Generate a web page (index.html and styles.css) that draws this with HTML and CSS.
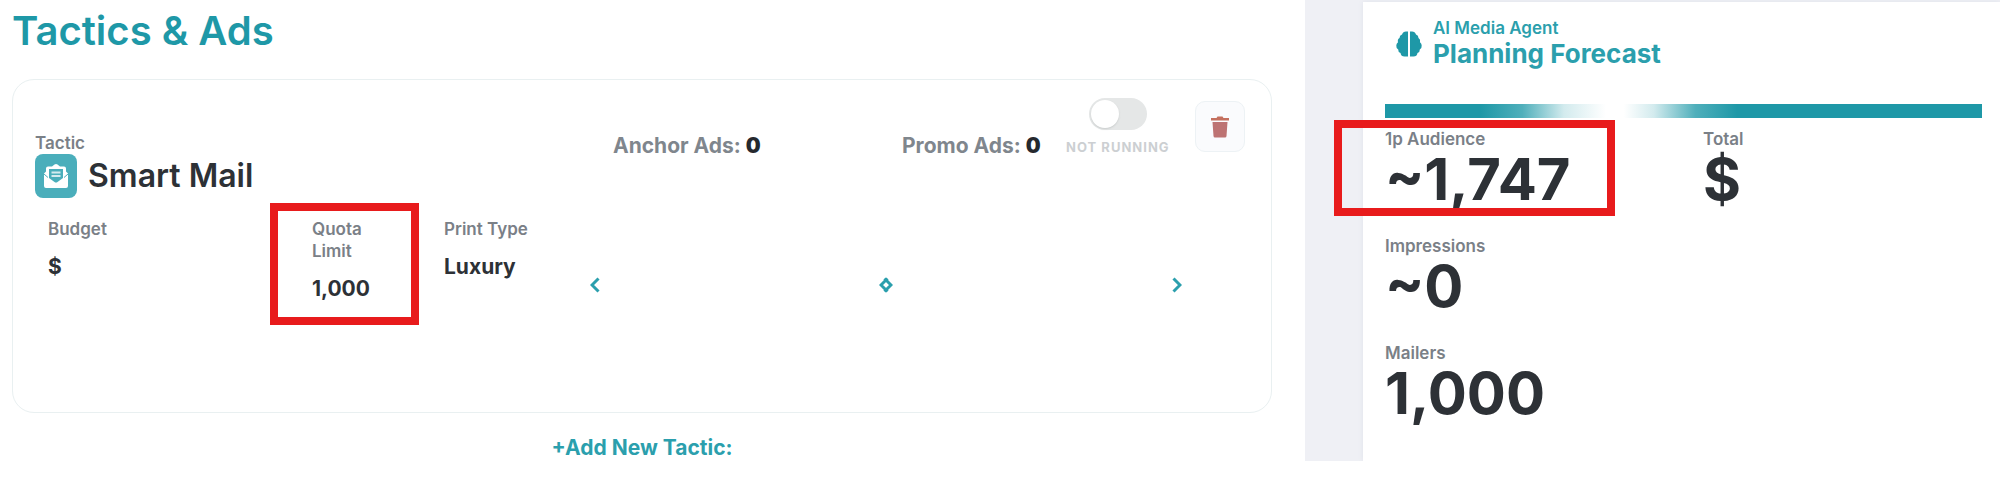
FILE: index.html
```html
<!DOCTYPE html>
<html lang="en">
<head>
<meta charset="utf-8">
<title>Tactics &amp; Ads</title>
<link rel="stylesheet" href="styles.css">
</head>
<body>
<div class="page">
  <main class="main">
    <h1 class="title">Tactics &amp; Ads</h1>
    <section class="card">
      <header class="card-head">
        <div class="tactic">
          <div class="label">Tactic</div>
          <div class="tactic-row">
            <span class="tactic-icon">
              <svg width="26" height="26" viewBox="0 0 26 26" aria-hidden="true">
                <path d="M1 10.500 3 8.500V5.500Q3 3.500 5 3.500H9L11.500 1.500Q13 .5 14.500 1.500L17 3.500H21Q23 3.500 23 5.500V8.500L25 10.500V23Q25 25 23 25H3Q1 25 1 23Z" fill="#fff"/>
                <path d="M6 6H20V15L14.500 19Q13 20 11.500 19L6 15Z" fill="#4aaebb"/>
                <path d="M8.500 9.500H17.500M8.500 13H17.500" stroke="#d3ebef" stroke-width="2"/>
                <path d="M1 11 5 14.500M25 11 21 14.500" fill="none" stroke="#4aaebb" stroke-width="1"/>
              </svg>
            </span>
            <h2 class="tactic-name">Smart Mail</h2>
          </div>
        </div>
        <div class="count">Anchor Ads: <b>0</b></div>
        <div class="actions">
          <div class="count">Promo Ads: <b>0</b></div>
          <label class="status">
            <input class="switch" type="checkbox">
            <span class="status-text">NOT RUNNING</span>
          </label>
          <button class="trash" type="button" aria-label="Delete tactic">
            <svg width="18" height="22" viewBox="0 0 18 22" aria-hidden="true">
              <path d="M0 2H5.500L6.500 .5H11.500L12.500 2H18V4.500H0Z" fill="#c4705f"/>
              <path d="M1.500 6H16.500L15.500 20Q15.400 21.500 14 21.500H4Q2.600 21.500 2.500 20Z" fill="#bd7373"/>
            </svg>
          </button>
        </div>
      </header>
      <div class="details">
        <div>
          <div class="label">Budget</div>
          <div class="value">$</div>
        </div>
        <div class="quota">
          <div class="label">Quota<br>Limit</div>
          <div class="value">1,000</div>
          <span class="mark mark-quota"></span>
        </div>
        <div>
          <div class="label">Print Type</div>
          <div class="value">Luxury</div>
        </div>
        <div class="carousels">
          <div class="carousel">
            <button class="arrow" type="button" aria-label="Previous anchor ad"><svg width="10" height="16" viewBox="0 0 10 16"><path d="M8.500 1.500 2 8l6.500 6.500"/></svg></button>
            <button class="arrow" type="button" aria-label="Next anchor ad"><svg width="10" height="16" viewBox="0 0 10 16"><path d="M1.500 1.500 8 8l-6.500 6.500"/></svg></button>
          </div>
          <div class="carousel">
            <button class="arrow" type="button" aria-label="Previous promo ad"><svg width="10" height="16" viewBox="0 0 10 16"><path d="M8.500 1.500 2 8l6.500 6.500"/></svg></button>
            <button class="arrow" type="button" aria-label="Next promo ad"><svg width="10" height="16" viewBox="0 0 10 16"><path d="M1.500 1.500 8 8l-6.500 6.500"/></svg></button>
          </div>
        </div>
      </div>
    </section>
    <button class="add" type="button">+Add New Tactic:</button>
  </main>
  <aside class="side">
    <section class="forecast">
      <header class="forecast-head">
        <svg class="brain" width="26" height="26" viewBox="0 0 26 26" aria-hidden="true">
          <path d="M12 .5V25.500H8.500Q5 25.500 4.500 22Q2 21 2.200 18.500Q0 17 .3 14.500Q.3 12.500 2 11.300Q1.200 8.500 3.500 7Q3.500 4.300 6 3.500Q7 .5 10 .5ZM14 .5V25.500H17.500Q21 25.500 21.500 22Q24 21 23.800 18.500Q26 17 25.700 14.500Q25.700 12.500 24 11.300Q24.800 8.500 22.500 7Q22.500 4.300 20 3.500Q19 .5 16 .5Z" fill="#1e98a7"/>
        </svg>
        <div>
          <div class="agent">AI Media Agent</div>
          <h2 class="forecast-title">Planning Forecast</h2>
        </div>
      </header>
      <div class="bar"></div>
      <div class="metrics">
        <div class="metric">
          <div class="label">1p Audience</div>
          <div class="figure">~1,747</div>
          <span class="mark mark-audience"></span>
        </div>
        <div class="metric">
          <div class="label">Total</div>
          <div class="figure">$</div>
        </div>
        <div class="metric wide">
          <div class="label">Impressions</div>
          <div class="figure">~0</div>
        </div>
        <div class="metric wide">
          <div class="label">Mailers</div>
          <div class="figure">1,000</div>
        </div>
      </div>
    </section>
  </aside>
</div>
</body>
</html>
```
FILE: styles.css
```css
* { box-sizing: border-box; }
body {
  margin: 0;
  background: #fff;
  color: #2d3136;
  font-family: Inter, "Liberation Sans", sans-serif;
}
h1, h2 { margin: 0; }
button {
  padding: 0;
  border: 0;
  background: none;
  font-family: inherit;
  cursor: pointer;
}
svg { display: block; }

.page {
  display: grid;
  grid-template-columns: 1305fr 695fr;
  overflow: clip;
}
.main {
  display: flex;
  flex-direction: column;
  padding: 7px 33px 0 12px;
}
.title {
  color: #1e98a7;
  font-size: 40px;
  font-weight: 600;
  line-height: 48px;
}
.card {
  margin-top: 24px;
  padding: 18px 26px 60px 22px;
  border: 1px solid #e9f0f1;
  border-radius: 22px;
}
.card-head {
  display: grid;
  grid-template-columns: 578fr 289fr 343fr;
  align-items: start;
}
.tactic { padding-top: 34px; }
.label {
  color: #7a8087;
  font-size: 17px;
  font-weight: 600;
  line-height: 22px;
}
.tactic-row {
  display: flex;
  align-items: center;
  gap: 11px;
}
.tactic-icon {
  display: grid;
  place-items: center;
  width: 42px;
  height: 44px;
  border-radius: 8px;
  background: #4aaebb;
}
.tactic-name {
  font-size: 32px;
  font-weight: 600;
  line-height: 44px;
}
.count {
  padding-top: 39px;
  color: #7f868d;
  font-size: 21px;
  font-weight: 700;
  line-height: 18px;
  white-space: nowrap;
}
.count b { color: #25292e; }
.actions {
  display: flex;
  align-items: center;
  justify-content: space-between;
}
.status {
  display: flex;
  flex-direction: column;
  align-items: center;
  gap: 9px;
}
.switch {
  appearance: none;
  display: flex;
  width: 58px;
  height: 32px;
  margin: 0;
  padding: 2px;
  border-radius: 16px;
  background: #e5e7e7;
}
.switch::before {
  content: "";
  width: 28px;
  height: 28px;
  border-radius: 50%;
  background: #fff;
  box-shadow: 0 1px 2px #c9cccc;
}
.status-text {
  color: #cccfd2;
  font-size: 13px;
  font-weight: 700;
  letter-spacing: 1px;
  line-height: 16px;
  white-space: nowrap;
}
.trash {
  display: grid;
  place-items: center;
  width: 50px;
  height: 51px;
  border: 1px solid #edf2f5;
  border-radius: 10px;
  background: #fafbfd;
}
.details {
  display: grid;
  grid-template-columns: 264fr 132fr 146fr 592fr;
  margin-top: 20px;
  padding: 0 63px 0 13px;
}
.value {
  margin-top: 13px;
  font-size: 21px;
  font-weight: 700;
  line-height: 28px;
}
.quota, .metric { position: relative; }
.mark {
  position: absolute;
  border: 8px solid #e81b1c;
}
.mark-quota {
  top: -15px;
  bottom: 27px;
  left: -42px;
  width: 149px;
}
.carousels {
  display: flex;
  height: 134px;
}
.carousel {
  display: flex;
  flex: 1;
  align-items: center;
  justify-content: space-between;
}
.carousel:first-child { margin-right: -7px; }
.carousel:last-child { margin-left: -7px; }
.arrow svg {
  fill: none;
  stroke: #2b9fad;
  stroke-width: 3;
}
.add {
  align-self: center;
  margin-top: 22px;
  color: #2b9fad;
  font-size: 21px;
  font-weight: 700;
  line-height: 26px;
}

.side {
  padding: 2px 0 0 58px;
  background: #eff0f5;
}
.forecast {
  height: 100%;
  padding: 16px 18px 0 22px;
  background: #fff;
  box-shadow: 0 0 5px #dfe3ea;
}
.forecast-head {
  display: flex;
  align-items: center;
  gap: 11px;
  padding-left: 11px;
  color: #2b9fad;
}
.agent {
  font-size: 17px;
  font-weight: 600;
  line-height: 20px;
}
.forecast-title {
  font-size: 26px;
  font-weight: 700;
  line-height: 32px;
}
.bar {
  height: 14px;
  margin-top: 34px;
  background: linear-gradient(90deg, #1e98a7 16%, #4fafbb 23%, #d3ebee 30%, #fff 37%, #fff 40%, #d3ebee 45%, #4fafbb 52%, #1e98a7 59%);
}
.metrics {
  display: grid;
  grid-template-columns: 318fr 279fr;
  row-gap: 29px;
  margin-top: 10px;
}
.wide { grid-column: 1 / -1; }
.figure {
  font-size: 58px;
  font-weight: 700;
  line-height: 58px;
}
.metric { height: 78px; }
.mark-audience {
  top: -8px;
  bottom: -10px;
  left: -51px;
  width: 281px;
}
```
